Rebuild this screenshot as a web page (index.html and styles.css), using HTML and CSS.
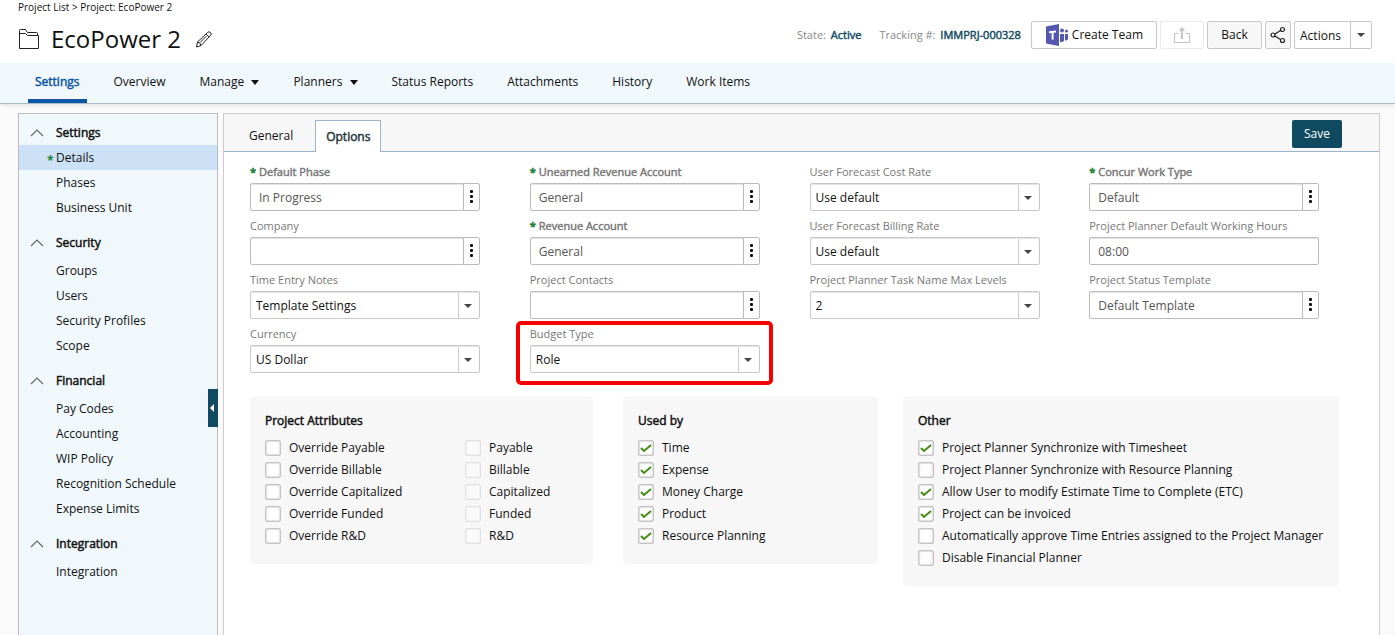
FILE: index.html
```html
<!DOCTYPE html>
<html lang="en">
<head>
    <meta charset="UTF-8">
    <meta name="viewport" content="width=device-width, initial-scale=1.0">
    <title>Project: EcoPower 2</title>
    <link rel="stylesheet" href="styles.css">
</head>
<body>
    <!-- Header -->
    <header class="page-header">
        <div class="heading">
            <div class="breadcrumb"><a href="#">Project List</a> &gt; Project: EcoPower 2</div>
            <div class="title-row">
                <svg class="folder-icon" width="22" height="22" viewBox="0 0 22 22" fill="none" stroke="#222">
                    <path d="M1.500 20.500V2.500q0-1 1-1H7.500L9.500 4.500H18.500q1 0 1 1V7"/>
                    <path d="M1.500 5.500H7.500L9.500 7.500H20.500V20.500H1.500"/>
                </svg>
                <h1>EcoPower 2</h1>
                <button class="edit-button" aria-label="Edit name">
                    <svg width="18" height="18" viewBox="0 0 18 18" fill="none" stroke="#222">
                        <path d="M1.500 17l1-5L12.500 2.500q1.500-1.500 3 0t0 3L6 15.500z"/>
                        <path d="M2.500 12q3 .5 3.500 3.500M11 4l3 3M5 12.500l6.500-6.500"/>
                    </svg>
                </button>
            </div>
        </div>
        <div class="header-tools">
            <span class="meta">State: <b>Active</b></span>
            <span class="meta">Tracking #: <b>IMMPRJ-000328</b></span>
            <div class="buttons">
                <button class="btn team">
                    <svg width="24" height="24" viewBox="0 0 24 24">
                        <path fill="#5558af" d="M1 3.500L14 1v22L1 20.500z"/>
                        <path fill="#fff" d="M4 8.200l7-.6v2l-2.400.2v7l-2-.2V10L4 10.200z"/>
                        <circle cx="17" cy="7.500" r="2" fill="#5558af"/>
                        <circle cx="21.500" cy="8" r="1.500" fill="#5558af"/>
                        <path fill="#5558af" d="M15 11h4v7q-1.500 1.500-4 1zM20 11h3v5q-1 2-3 1.500z"/>
                    </svg>
                    Create Team
                </button>
                <button class="btn export" aria-label="Export" disabled>
                    <svg width="18" height="18" viewBox="0 0 18 18" fill="none" stroke="#c4c4c4">
                        <path d="M5.500 7.500h-4v9h15v-9h-4"/>
                        <path stroke-width="2" d="M9 13V3"/>
                        <path fill="#c4c4c4" d="M6.500 4.500L9 1.500l2.500 3z"/>
                    </svg>
                </button>
                <button class="btn back">Back</button>
                <button class="btn share" aria-label="Share">
                    <svg width="16" height="18" viewBox="0 0 16 18" fill="none" stroke="#222" stroke-width="1.200">
                        <circle cx="3" cy="9" r="2"/>
                        <circle cx="12.500" cy="3.500" r="2"/>
                        <circle cx="12.500" cy="14.500" r="2"/>
                        <path d="M5 8l5.500-3.500M5 10l5.500 3.500"/>
                    </svg>
                </button>
                <div class="split">
                    <button class="btn">Actions</button>
                    <button class="btn arrow" aria-label="More actions"><span class="caret"></span></button>
                </div>
            </div>
        </div>
    </header>

    <nav class="main-nav">
        <a href="#" class="active">Settings</a>
        <a href="#">Overview</a>
        <a href="#">Manage <span class="caret"></span></a>
        <a href="#">Planners <span class="caret"></span></a>
        <a href="#">Status Reports</a>
        <a href="#">Attachments</a>
        <a href="#">History</a>
        <a href="#">Work Items</a>
    </nav>

    <div class="content">
        <!-- Sidebar -->
        <aside class="sidebar">
            <section>
                <h2><svg width="14" height="8" viewBox="0 0 14 8"><path d="M1 7l6-6 6 6"/></svg>Settings</h2>
                <a href="#" class="selected"><span class="star">*</span>Details</a>
                <a href="#">Phases</a>
                <a href="#">Business Unit</a>
            </section>
            <section>
                <h2><svg width="14" height="8" viewBox="0 0 14 8"><path d="M1 7l6-6 6 6"/></svg>Security</h2>
                <a href="#">Groups</a>
                <a href="#">Users</a>
                <a href="#">Security Profiles</a>
                <a href="#">Scope</a>
            </section>
            <section>
                <h2><svg width="14" height="8" viewBox="0 0 14 8"><path d="M1 7l6-6 6 6"/></svg>Financial</h2>
                <a href="#">Pay Codes</a>
                <a href="#">Accounting</a>
                <a href="#">WIP Policy</a>
                <a href="#">Recognition Schedule</a>
                <a href="#">Expense Limits</a>
            </section>
            <section>
                <h2><svg width="14" height="8" viewBox="0 0 14 8"><path d="M1 7l6-6 6 6"/></svg>Integration</h2>
                <a href="#">Integration</a>
            </section>
            <button class="collapse" aria-label="Collapse sidebar"><svg width="4" height="8" viewBox="0 0 4 8"><path fill="#fff" d="M4 0v8L0 4z"/></svg></button>
        </aside>

        <!-- Options form -->
        <main class="panel">
            <div class="tabs">
                <button class="tab">General</button>
                <button class="tab current">Options</button>
                <button class="save">Save</button>
            </div>

            <form class="fields">
                <div class="field required">
                    <label for="phase"><span class="star">*</span>Default Phase</label>
                    <div class="lookup"><input type="text" id="phase" value="In Progress"><button type="button" aria-label="Choose phase"><i></i></button></div>
                </div>
                <div class="field required">
                    <label for="unearned"><span class="star">*</span>Unearned Revenue Account</label>
                    <div class="lookup"><input type="text" id="unearned" value="General"><button type="button" aria-label="Choose account"><i></i></button></div>
                </div>
                <div class="field">
                    <label for="cost-rate">User Forecast Cost Rate</label>
                    <select id="cost-rate"><option>Use default</option></select>
                </div>
                <div class="field required">
                    <label for="work-type"><span class="star">*</span>Concur Work Type</label>
                    <div class="lookup"><input type="text" id="work-type" value="Default"><button type="button" aria-label="Choose work type"><i></i></button></div>
                </div>

                <div class="field">
                    <label for="company">Company</label>
                    <div class="lookup"><input type="text" id="company"><button type="button" aria-label="Choose company"><i></i></button></div>
                </div>
                <div class="field required">
                    <label for="revenue"><span class="star">*</span>Revenue Account</label>
                    <div class="lookup"><input type="text" id="revenue" value="General"><button type="button" aria-label="Choose account"><i></i></button></div>
                </div>
                <div class="field">
                    <label for="billing-rate">User Forecast Billing Rate</label>
                    <select id="billing-rate"><option>Use default</option></select>
                </div>
                <div class="field">
                    <label for="hours">Project Planner Default Working Hours</label>
                    <div class="lookup"><input type="text" id="hours" value="08:00"></div>
                </div>

                <div class="field">
                    <label for="notes">Time Entry Notes</label>
                    <select id="notes"><option>Template Settings</option></select>
                </div>
                <div class="field">
                    <label for="contacts">Project Contacts</label>
                    <div class="lookup"><input type="text" id="contacts"><button type="button" aria-label="Choose contacts"><i></i></button></div>
                </div>
                <div class="field">
                    <label for="levels">Project Planner Task Name Max Levels</label>
                    <select id="levels"><option>2</option></select>
                </div>
                <div class="field">
                    <label for="template">Project Status Template</label>
                    <div class="lookup"><input type="text" id="template" value="Default Template"><button type="button" aria-label="Choose template"><i></i></button></div>
                </div>

                <div class="field">
                    <label for="currency">Currency</label>
                    <select id="currency"><option>US Dollar</option></select>
                </div>
                <div class="field highlight">
                    <label for="budget">Budget Type</label>
                    <select id="budget"><option>Role</option></select>
                </div>
            </form>

            <div class="cards">
                <section class="card attributes">
                    <h3>Project Attributes</h3>
                    <div class="columns">
                        <div>
                            <label><input type="checkbox">Override Payable</label>
                            <label><input type="checkbox">Override Billable</label>
                            <label><input type="checkbox">Override Capitalized</label>
                            <label><input type="checkbox">Override Funded</label>
                            <label><input type="checkbox">Override R&amp;D</label>
                        </div>
                        <div>
                            <label><input type="checkbox" disabled>Payable</label>
                            <label><input type="checkbox" disabled>Billable</label>
                            <label><input type="checkbox" disabled>Capitalized</label>
                            <label><input type="checkbox" disabled>Funded</label>
                            <label><input type="checkbox" disabled>R&amp;D</label>
                        </div>
                    </div>
                </section>
                <section class="card used-by">
                    <h3>Used by</h3>
                    <label><input type="checkbox" checked>Time</label>
                    <label><input type="checkbox" checked>Expense</label>
                    <label><input type="checkbox" checked>Money Charge</label>
                    <label><input type="checkbox" checked>Product</label>
                    <label><input type="checkbox" checked>Resource Planning</label>
                </section>
                <section class="card other">
                    <h3>Other</h3>
                    <label><input type="checkbox" checked>Project Planner Synchronize with Timesheet</label>
                    <label><input type="checkbox">Project Planner Synchronize with Resource Planning</label>
                    <label><input type="checkbox" checked>Allow User to modify Estimate Time to Complete (ETC)</label>
                    <label><input type="checkbox" checked>Project can be invoiced</label>
                    <label><input type="checkbox">Automatically approve Time Entries assigned to the Project Manager</label>
                    <label><input type="checkbox">Disable Financial Planner</label>
                </section>
            </div>
        </main>
    </div>
</body>
</html>
```
FILE: styles.css
```css
/* General */
* {
    box-sizing: border-box;
}

body {
    margin: 0;
    min-height: 100vh;
    display: flex;
    flex-direction: column;
    background: #fafafa;
    color: #111;
    font: 12px/18px "Open Sans", sans-serif;
}

a {
    color: inherit;
    text-decoration: none;
}

button, input, select {
    font: inherit;
    color: inherit;
    margin: 0;
}

button {
    padding: 0;
    cursor: pointer;
}

h1, h2, h3 {
    margin: 0;
    font-weight: 400;
}

/* heavier text that keeps the regular widths */
h2, h3, .meta b, .main-nav .active, .tab.current, .required label {
    font-weight: 400;
    -webkit-text-stroke: 0.04em currentColor;
}

.caret {
    display: inline-block;
    border: 4px solid transparent;
    border-top: 4px solid #444;
    border-bottom: 0;
}

/* Header */
.page-header {
    display: flex;
    justify-content: space-between;
    height: 63px;
    padding: 0 23px 0 18px;
    background: #fff;
}

.breadcrumb {
    font-size: 10px;
    line-height: 14px;
}

.title-row {
    display: flex;
    align-items: center;
    height: 50px;
}

h1 {
    margin: 0 14px 0 11px;
    font-size: 24px;
    line-height: 32px;
}

.edit-button {
    display: flex;
    border: 0;
    background: none;
}

.header-tools {
    display: flex;
    align-items: center;
    gap: 18px;
    padding-top: 7px;
}

.meta {
    color: #888;
    font-size: 11px;
}

.meta b {
    margin-left: 2px;
    color: #0f4a61;
}

.buttons {
    display: flex;
    gap: 3px;
    margin-left: -8px;
}

.btn {
    display: flex;
    align-items: center;
    justify-content: center;
    height: 28px;
    border: 1px solid #c8c8c8;
    border-radius: 2px;
    background: #fff;
}

.team {
    gap: 3px;
    padding: 0 13px;
}

.export {
    width: 44px;
    border-color: #ebebeb;
}

.back {
    width: 55px;
    background: #f7f7f7;
}

.share {
    width: 26px;
    background: #f7f7f7;
}

.split {
    display: flex;
}

.split .btn {
    width: 57px;
    padding: 2px 4px 0 0;
    border-radius: 2px 0 0 2px;
}

.split .arrow {
    width: 22px;
    padding: 0;
    margin-left: -1px;
    border-radius: 0 2px 2px 0;
}

/* Main navigation */
.main-nav {
    display: flex;
    gap: 20px;
    height: 41px;
    padding-left: 28px;
    background: #f0f8fc;
    border-bottom: 1px solid #a8bcc8;
    box-shadow: 0 2px 3px #e8e8e8;
}

.main-nav a {
    padding: 10px 7px 8px;
    border-bottom: 4px solid transparent;
}

.main-nav .active {
    color: #0b55a4;
    border-bottom-color: #0b55a4;
}

.main-nav .caret {
    margin-left: 4px;
    border-width: 5px 4px 0;
    border-top-color: #111;
    vertical-align: 1px;
}

.content {
    display: flex;
    flex: 1;
    gap: 5px;
    padding: 9px 15px 0 18px;
}

/* Sidebar */
.sidebar {
    position: relative;
    flex: 0 0 200px;
    padding-top: 6px;
    background: #f0f8fc;
    border: 1px solid #b9bdc0;
    border-bottom: 0;
}

.sidebar section {
    margin-bottom: 10px;
}

.sidebar h2 {
    display: flex;
    align-items: center;
    gap: 12px;
    margin-bottom: 3px;
    padding-left: 11px;
    font-size: 12px;
    line-height: 25px;
}

.sidebar section:first-child h2 {
    margin-bottom: 0;
}

.sidebar h2 svg {
    fill: none;
    stroke: #666;
    stroke-width: 1.2;
}

.sidebar a {
    display: block;
    padding-left: 37px;
    line-height: 25px;
}

.sidebar a.selected {
    padding-left: 28px;
    background: #cde1f6;
}

.star {
    display: inline-block;
    width: 9px;
    color: #1c8033;
    font-weight: 700;
}

.sidebar .star {
    line-height: 18px;
    vertical-align: -3px;
}

.collapse {
    position: absolute;
    top: 275px;
    right: -1px;
    display: flex;
    align-items: center;
    justify-content: flex-start;
    width: 10px;
    height: 38px;
    padding-left: 2px;
    border: 0;
    background: #0f4a61;
}

/* Panel */
.panel {
    flex: 1;
    background: #fff;
    border: 1px solid #ccc;
    border-bottom: 0;
}

.tabs {
    display: flex;
    align-items: flex-end;
    height: 38px;
    padding-right: 37px;
    background: #f7f7f7;
    border-bottom: 1px solid #9db3cd;
}

.tab {
    height: 32px;
    padding: 1px 22px 0 25px;
    border: 0;
    background: none;
}

.tab.current {
    margin-bottom: -1px;
    padding: 0 10px;
    border: 1px solid #9db3cd;
    border-bottom: 0;
    background: #fff;
    color: #263238;
}

.save {
    width: 50px;
    height: 28px;
    margin: 0 0 3px auto;
    border: 0;
    border-radius: 2px;
    background: #0f4a61;
    color: #fff;
}

/* Fields */
.fields {
    display: grid;
    grid-template-columns: repeat(4, 1fr);
    row-gap: 7px;
    padding: 12px 10px 0 26px;
}

.field {
    position: relative;
    max-width: 230px;
}

.field label {
    display: block;
    color: #777;
    font-size: 11px;
    line-height: 16px;
    padding-bottom: 3px;
}

.lookup {
    display: flex;
}

.lookup input {
    flex: 1;
    min-width: 0;
    height: 28px;
    padding: 0 8px;
    border: 1px solid #bbb;
    border-radius: 2px;
    background: #fff;
    color: #555;
    box-shadow: inset 0 1px 1px #e4e4e4;
}

.lookup button {
    width: 17px;
    height: 28px;
    margin-left: -1px;
    border: 1px solid #bbb;
    border-radius: 0 2px 2px 0;
    background: #fff;
}

.lookup i {
    display: block;
    width: 3px;
    height: 3px;
    margin: 0 auto 1px;
    border-radius: 1px;
    background: #111;
    box-shadow: 0 -5px #111, 0 5px #111;
}

select {
    display: block;
    width: 100%;
    height: 28px;
    padding: 2px 26px 0 5px;
    border: 1px solid #c8c8c8;
    border-radius: 2px;
    appearance: none;
    background: #fff url("data:image/svg+xml,%3Csvg xmlns='http://www.w3.org/2000/svg' width='21' height='26'%3E%3Cpath d='M0 0h1v26H0z' fill='%23c8c8c8'/%3E%3Cpath d='M6 12h8l-4 4z' fill='%23444'/%3E%3C/svg%3E") no-repeat right center;
    box-shadow: inset 0 1px 1px #e4e4e4;
}

.highlight::after {
    content: "";
    position: absolute;
    inset: -5px -13px -12px -14px;
    border: 4px solid #f80000;
    border-radius: 5px;
    pointer-events: none;
}

/* Checkbox cards */
.cards {
    display: flex;
    align-items: flex-start;
    padding: 24px 40px 0 26px;
}

.card {
    padding: 15px 15px 17px;
    border-radius: 3px;
    background: #f7f7f7;
}

.attributes {
    flex: 0 1 343px;
    margin-right: 30px;
}

.used-by {
    flex: 0 1 255px;
    margin-right: 25px;
}

.other {
    flex: 1 0 auto;
}

.card h3 {
    margin-bottom: 7px;
    font-size: 12px;
}

.columns {
    display: grid;
    grid-template-columns: 200px 1fr;
}

.card label {
    display: flex;
    align-items: center;
    gap: 8px;
    line-height: 22px;
}

.card input {
    width: 16px;
    height: 16px;
    border: 1px solid #c4c4c4;
    border-radius: 2px;
    appearance: none;
    background: #fff;
    box-shadow: inset 0 0 2px #999;
}

.card input:checked {
    background: #fff url("data:image/svg+xml,%3Csvg xmlns='http://www.w3.org/2000/svg' width='14' height='14' fill='none' stroke='%23458c14' stroke-width='2'%3E%3Cpath d='M2 7l3 3 7-6'/%3E%3C/svg%3E") no-repeat center;
}

.card input:disabled {
    background: #fafafa;
    border-color: #e0e0e0;
    box-shadow: inset 0 0 2px #e0e0e0;
}
```
